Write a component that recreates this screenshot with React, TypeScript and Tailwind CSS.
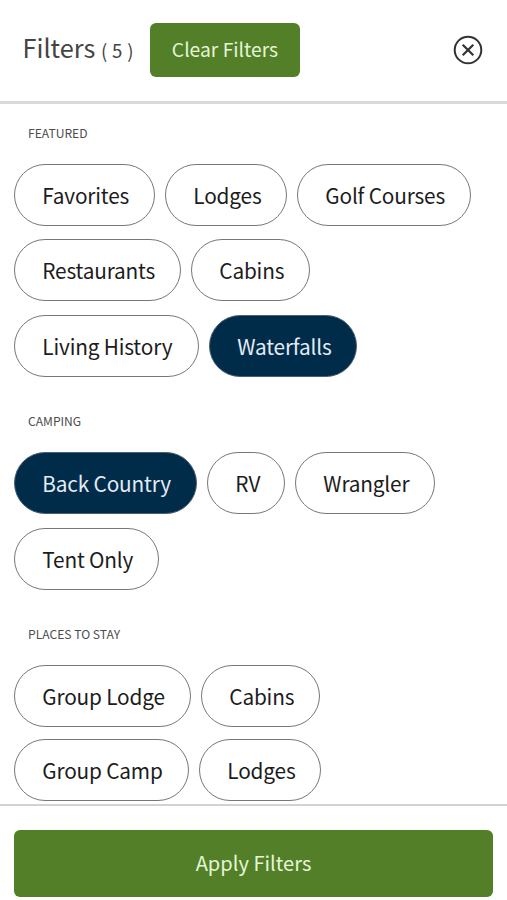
import React, { useState } from 'react';
import { clsx } from 'clsx';

interface FilterOption {
  id: string;
  label: string;
  width: string;
}

interface FilterGroup {
  title: string;
  className: string;
  rowGap: string;
  rows: FilterOption[][];
}

const groups: FilterGroup[] = [
  {
    title: 'Featured',
    className: 'pt-[18.9px]',
    rowGap: 'gap-[13.5px]',
    rows: [
      [
        { id: 'favorites', label: 'Favorites', width: 'w-[141px]' },
        { id: 'lodges', label: 'Lodges', width: 'w-[122px]' },
        { id: 'golf', label: 'Golf Courses', width: 'w-[174px]' },
      ],
      [
        { id: 'restaurants', label: 'Restaurants', width: 'w-[167px]' },
        { id: 'cabins', label: 'Cabins', width: 'w-[119px]' },
      ],
      [
        { id: 'history', label: 'Living History', width: 'w-[185px]' },
        { id: 'waterfalls', label: 'Waterfalls', width: 'w-[148px]' },
      ],
    ],
  },
  {
    title: 'Camping',
    className: 'pt-[34.5px]',
    rowGap: 'gap-[13.5px]',
    rows: [
      [
        { id: 'back-country', label: 'Back Country', width: 'w-[183px]' },
        { id: 'rv', label: 'RV', width: 'w-[78px]' },
        { id: 'wrangler', label: 'Wrangler', width: 'w-[140px]' },
      ],
      [{ id: 'tent', label: 'Tent Only', width: 'w-[145px]' }],
    ],
  },
  {
    title: 'Places to stay',
    className: 'pt-[34.5px]',
    rowGap: 'gap-[11.5px]',
    rows: [
      [
        { id: 'group-lodge', label: 'Group Lodge', width: 'w-[177px]' },
        { id: 'stay-cabins', label: 'Cabins', width: 'w-[119px]' },
      ],
      [
        { id: 'group-camp', label: 'Group Camp', width: 'w-[175px]' },
        { id: 'stay-lodges', label: 'Lodges', width: 'w-[122px]' },
      ],
    ],
  },
];

interface PillProps {
  option: FilterOption;
  isActive: boolean;
  onToggle: (id: string) => void;
}

const Pill: React.FC<PillProps> = ({ option, isActive, onToggle }) => (
  <button
    type="button"
    aria-pressed={isActive}
    onClick={() => onToggle(option.id)}
    className={clsx(
      'h-[62px] shrink-0 rounded-full border pl-[27.3px] text-left text-[20.8px] leading-[60px] tracking-[-0.17px] whitespace-nowrap',
      option.width,
      isActive ? 'border-[#4b6173] bg-[#002b49] text-[#e2ebf5]' : 'border-[#777777] bg-white text-[#1c1c1c]'
    )}
  >
    {option.label}
  </button>
);

const CloseIcon = () => (
  <svg width="30" height="30" viewBox="0 0 30 30" fill="none" stroke="#333333" strokeWidth="2">
    <circle cx="15" cy="15" r="13.3" />
    <path d="M9.7 9.7l10.6 10.6M20.3 9.7L9.7 20.3" strokeWidth="2.2" />
  </svg>
);

const App: React.FC = () => {
  const [selected, setSelected] = useState<string[]>(['waterfalls', 'back-country']);
  const [count, setCount] = useState(5);

  const handleToggle = (id: string) => {
    const isOn = selected.includes(id);
    setSelected(isOn ? selected.filter((item) => item !== id) : [...selected, id]);
    setCount(isOn ? count - 1 : count + 1);
  };

  const handleClear = () => {
    setSelected([]);
    setCount(0);
  };

  return (
    <div className="flex h-screen w-full flex-col overflow-hidden bg-white font-['Noto_Sans_CJK_SC','Open_Sans',sans-serif]">
      <header className="flex h-[104px] shrink-0 items-start border-b-3 border-[#dadada] pr-6 pl-[22.5px]">
        <h1 className="mt-[27px] w-[127.5px] text-[25.3px] leading-10 whitespace-nowrap text-[#444444]">
          Filters <span className="text-[18.6px] [word-spacing:0.6px]">( {count} )</span>
        </h1>
        <button
          type="button"
          onClick={handleClear}
          className="mt-[23.4px] h-[54px] w-[150px] rounded-md bg-[#537f28] pb-0.5 text-[19.3px] text-[#e4f5d5]"
        >
          Clear Filters
        </button>
        <button type="button" aria-label="Close filters" className="mt-[35px] ml-auto">
          <CloseIcon />
        </button>
      </header>

      <main className="min-h-0 flex-1 overflow-hidden pl-[14px]">
        {groups.map((group) => (
          <section key={group.title} className={group.className}>
            <h2 className="mb-[21px] ml-[14px] h-5 text-[12.1px] leading-5 text-[#4d4d4d] uppercase">{group.title}</h2>
            <div className={clsx('flex flex-col', group.rowGap)}>
              {group.rows.map((row) => (
                <div key={row[0].id} className="flex gap-2.5">
                  {row.map((option) => (
                    <Pill
                      key={option.id}
                      option={option}
                      isActive={selected.includes(option.id)}
                      onToggle={handleToggle}
                    />
                  ))}
                </div>
              ))}
            </div>
          </section>
        ))}
      </main>

      <footer className="h-24 shrink-0 border-t-2 border-[#d2d2d2] px-[14px] pt-6">
        <button type="button" className="h-[67px] w-full rounded-md bg-[#537f28] text-[20.1px] text-[#e4f5d5]">
          Apply Filters
        </button>
      </footer>
    </div>
  );
};

export default App;
